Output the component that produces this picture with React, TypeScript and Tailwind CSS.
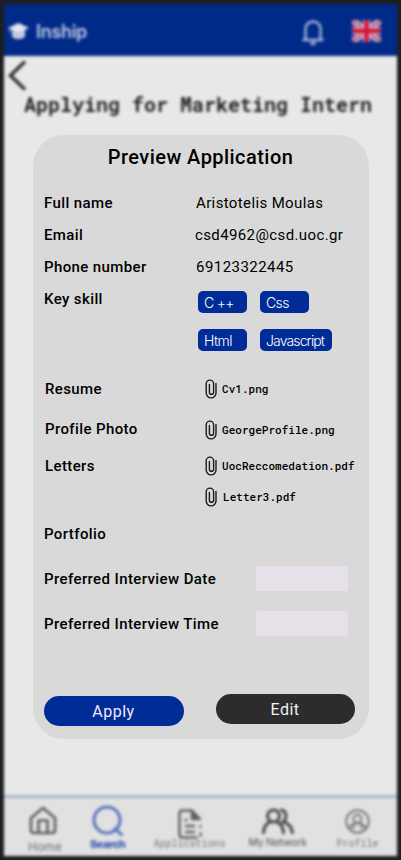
import type { ReactNode } from "react";

const mono = "font-['Roboto_Mono','DejaVu_Sans_Mono',monospace]";

function Clip() {
  return (
    <svg className="h-5 w-3 shrink-0" viewBox="0 0 12 20" fill="none" stroke="#1c1c1c" strokeWidth="1.4" strokeLinecap="round">
      <path d="M11 4.500v9.500a4.900 4.900 0 0 1-9.800 0V4.800a3.700 3.700 0 0 1 7.400 0V13.200a2.100 2.100 0 0 1-4.200 0V5.500" />
    </svg>
  );
}

function FileItem({ name, shift = "pl-[5px]" }: { name: string; shift?: string }) {
  return (
    <div className="flex items-center">
      <Clip />
      <span className={`${mono} ${shift} tracking-[0.03px] whitespace-nowrap text-[11px] leading-4 font-medium text-black`}>{name}</span>
    </div>
  );
}

function Row({ label, height, indent = "pl-[11px]", children }: { label: string; height: string; indent?: string; children?: ReactNode }) {
  return (
    <div className={`flex items-center ${height} ${indent}`}>
      <div className="flex-1 whitespace-nowrap text-[15px] font-medium tracking-[0.39px]">{label}</div>
      {children}
    </div>
  );
}

function Chip({ label, width, tracking = "tracking-[-0.6px]" }: { label: string; width: string; tracking?: string }) {
  return (
    <span className={`flex h-[22px] items-center rounded-[5px] bg-[#002c98] pl-[6px] font-['Inter',sans-serif] text-[14px] font-light whitespace-nowrap text-white ${width} ${tracking}`}>
      {label}
    </span>
  );
}

function Flag() {
  return (
    <svg className="h-[22px] w-[29px]" viewBox="0 0 29 22">
      <path fill="#1438a0" d="M0 0h29v22H0z" />
      <path d="M0 0l29 22M29 0L0 22" stroke="#d4d0e4" strokeWidth="6" />
      <path d="M0 0l29 22M29 0L0 22" stroke="#d02b4b" strokeWidth="1.8" />
      <path d="M14.5 0v22M0 11h29" stroke="#d8bfd0" strokeWidth="7" />
      <path d="M14.5 0v22M0 11h29" stroke="#cf1436" strokeWidth="4.6" />
    </svg>
  );
}

function NavItem({ label, cls, icon, iconBox }: { label: string; cls: string; icon: ReactNode; iconBox: string }) {
  return (
    <div className="flex flex-col items-center">
      <div className={`flex items-center justify-center ${iconBox}`}>{icon}</div>
      <span className={`whitespace-nowrap ${cls}`}>{label}</span>
    </div>
  );
}

function Screen() {
  return (
    <div className="h-[860px] w-[401px] bg-[#1d1f20] px-1 py-1 blur-[1.4px]">
      <div className="flex h-[852px] w-[393px] flex-col bg-[#e8e8e8]">
        <header className="flex h-[52px] items-center bg-[#002a88] pt-[2px] pr-[16px] pl-[4px]">
          <svg className="h-4 w-[21px]" viewBox="0 0 21 16" fill="#e6e8f2">
            <path d="M10.500 0L21 5l-10.500 5L0 5z" />
            <path d="M4 6.500v7c3 3.500 10 3.500 13 0v-7L10.500 10z" opacity=".85" />
            <path d="M1 5h1.500v5H1z" opacity=".5" />
          </svg>
          <span className="pl-[7px] font-['Inter',sans-serif] text-[18px] font-semibold tracking-[-0.3px] text-[#c3cce6]">Inship</span>
          <svg className="mt-1 ml-auto h-7 w-6" viewBox="0 0 24 28" fill="none" stroke="#a9b7db" strokeWidth="2.400" strokeLinejoin="round">
            <path d="M1.500 21h21M4.500 20.500V10a7.500 7.500 0 0 1 15 0v10.500" />
            <path d="M9.500 24.500h5" strokeWidth="3" />
          </svg>
          <div className="ml-[27px]"><Flag /></div>
        </header>
        <div className="flex h-[38px] items-start pt-1 pl-[4px]">
          <svg className="h-[31px] w-[19px]" viewBox="0 0 19 31" fill="none" stroke="#303030" strokeWidth="3.400">
            <path d="M17 1.500L2.500 15.500l14.500 14" />
          </svg>
        </div>
        <h1 className={`${mono} -mt-[2px] pl-[20px] text-[20px] leading-6 font-bold whitespace-nowrap text-[#222]`}>Applying for Marketing Intern</h1>
        <nav className="mt-auto flex h-[61px] shrink-0 items-start border-t-[3px] border-[#aab6cf] bg-[#e1e1e1] pt-[7px] pl-[21px] text-[#606060]">
          <NavItem
            label="Home"
            iconBox="h-[32px] w-[36px]"
            cls="pt-[3px] pl-[3px] font-['Inter',sans-serif] text-[12px] leading-[14px] font-normal text-[#707070]"
            icon={
              <svg className="mb-[2px] h-[29px] w-[28px]" viewBox="0 0 28 29" fill="none" stroke="currentColor" strokeWidth="2.700" strokeLinejoin="round">
                <path d="M2 12L14 2l12 10v12q0 3-3 3H5q-3 0-3-3zM9.500 27V14.500h9V27" />
              </svg>
            }
          />
          <div className="ml-[24px]">
            <NavItem
              label="Search"
              iconBox="h-[32px] w-[44px]"
              cls="font-['Inter',sans-serif] text-[11px] leading-[14px] font-extrabold tracking-[-0.5px] text-[#3054b0]"
              icon={
                <svg className="h-[32px] w-[32px]" viewBox="0 0 32 32" fill="none" stroke="#5572bc" strokeWidth="3">
                  <circle cx="15" cy="15" r="13" />
                  <path d="M22 23l8.500 7.500" />
                </svg>
              }
            />
          </div>
          <div className="ml-[22px]">
            <NavItem
              label="Applications"
              iconBox="h-[34px] w-[76px]"
              cls={`${mono} -mt-[2px] text-[10px] leading-[14px] text-[#777]`}
              icon={
                <svg className="mt-[3px] h-[30px] w-[24px]" viewBox="0 0 24 30" fill="none" stroke="currentColor" strokeWidth="2.500">
                  <path d="M14 1.500H4.500q-3 0-3 3v21q0 3 3 3h15" />
                  <path d="M14 1.500V10h8z" fill="currentColor" strokeLinejoin="round" />
                  <path d="M22.500 16v3M22.500 23v5" strokeWidth="2" />
                  <path d="M6.500 11h3M7 17h10M7 23h10" />
                </svg>
              }
            />
          </div>
          <div className="ml-[20px]">
            <NavItem
              label="My Network"
              iconBox="h-[32px] w-[60px]"
              cls="-mt-[1px] font-['Inter',sans-serif] text-[10.500px] leading-[14px] font-medium tracking-[-0.3px] text-[#666]"
              icon={
                <svg className="h-[27px] w-[32px]" viewBox="0 0 32 27" fill="none" stroke="#4a4a4a" strokeWidth="3">
                  <circle cx="11.500" cy="8" r="6" />
                  <path d="M1.500 26q0-10 7-12M14.500 14q7 2 7 12M18 2q6 0 6 6.500 0 3-3 5.500 9 2 9.500 12" />
                </svg>
              }
            />
          </div>
          <div className="ml-[28px]">
            <NavItem
              label="Profile"
              iconBox="h-[32px] w-[44px]"
              cls={`${mono} text-[10px] leading-[14px] text-[#777]`}
              icon={
                <svg className="h-[25px] w-[25px]" viewBox="0 0 25 25" fill="none" stroke="#777" strokeWidth="2">
                  <circle cx="12.500" cy="12.500" r="11.300" />
                  <circle cx="12.500" cy="9.800" r="4" />
                  <path d="M4.500 20q1-4.500 5-5.500h6q4 1 5 5.500M8.500 20v-5M16.500 20v-5" />
                </svg>
              }
            />
          </div>
        </nav>
      </div>
    </div>
  );
}

function Dialog() {
  return (
    <section className="absolute top-[135px] left-[33px] flex h-[604px] w-[336px] flex-col rounded-[31px] bg-[#d9d9d9] pt-[10px] font-['Roboto',sans-serif] text-black">
      <h2 className="mb-[18px] pr-[1px] text-center text-[20px] leading-6 font-medium tracking-[0.45px]">Preview Application</h2>
      <Row label="Full name" height="h-8">
        <div className="w-[174px] pl-[1px] text-[15px] tracking-[0.37px]">Aristotelis Moulas</div>
      </Row>
      <Row label="Email" height="h-8">
        <div className="w-[174px] text-[15px] tracking-[0.38px]">csd4962@csd.uoc.gr</div>
      </Row>
      <Row label="Phone number" height="h-8">
        <div className="w-[174px] pl-[1px] text-[15px] tracking-[0.45px]">69123322445</div>
      </Row>
      <div className="flex h-[88px] pl-[11px]">
        <div className="flex-1 text-[15px] leading-8 font-medium tracking-[0.39px]">Key skill</div>
        <div className="flex w-[171px] flex-col gap-4 pt-2">
          <div className="flex gap-[13px]">
            <Chip label="C ++" width="w-[49px]" tracking="tracking-[-0.7px]" />
            <Chip label="Css" width="w-[49px]" />
          </div>
          <div className="flex gap-[13px]">
            <Chip label="Html" width="w-[49px]" />
            <Chip label="Javascript" width="w-[72px]" tracking="tracking-[-0.87px]" />
          </div>
        </div>
      </div>
      <Row label="Resume" height="h-9" indent="pl-3">
        <div className="w-[164px]"><FileItem name="Cv1.png" /></div>
      </Row>
      <Row label="Profile Photo" height="h-11" indent="pl-3">
        <div className="w-[164px] pt-[2px]"><FileItem name="GeorgeProfile.png" /></div>
      </Row>
      <Row label="Letters" height="h-[30px]" indent="pl-3">
        <div className="w-[164px]"><FileItem name="UocReccomedation.pdf" /></div>
      </Row>
      <div className="flex h-[31px] items-center justify-end">
        <div className="w-[164px]"><FileItem name="Letter3.pdf" shift="pl-[6px]" /></div>
      </div>
      <Row label="Portfolio" height="h-11" />
      <Row label="Preferred Interview Date" height="h-[46px]">
        <div className="mr-[21px] mb-[2px] h-[25px] w-[92px] rounded-t-[3px] bg-[#e6e0e9]" />
      </Row>
      <Row label="Preferred Interview Time" height="h-11">
        <div className="mr-[21px] mb-[2px] h-[25px] w-[92px] rounded-t-[3px] bg-[#e6e0e9]" />
      </Row>
      <div className="mt-12 flex items-start justify-between pr-[14px] pl-[11px] text-[16px]">
        <button className="mt-[2px] h-[30px] w-[140px] rounded-full bg-[#002c98] pt-[2px] pr-[1px] tracking-[0.5px] text-[#f3e8f6]">Apply</button>
        <button className="h-[30px] w-[139px] rounded-full bg-[#2c2c2c] pt-[1px] pr-[1px] tracking-[0.5px] text-[#f0f0f0]">Edit</button>
      </div>
    </section>
  );
}

export default function App() {
  return (
    <div className="relative h-[860px] w-[401px] overflow-hidden bg-[#1d1f20]">
      <Screen />
      <Dialog />
    </div>
  );
}
